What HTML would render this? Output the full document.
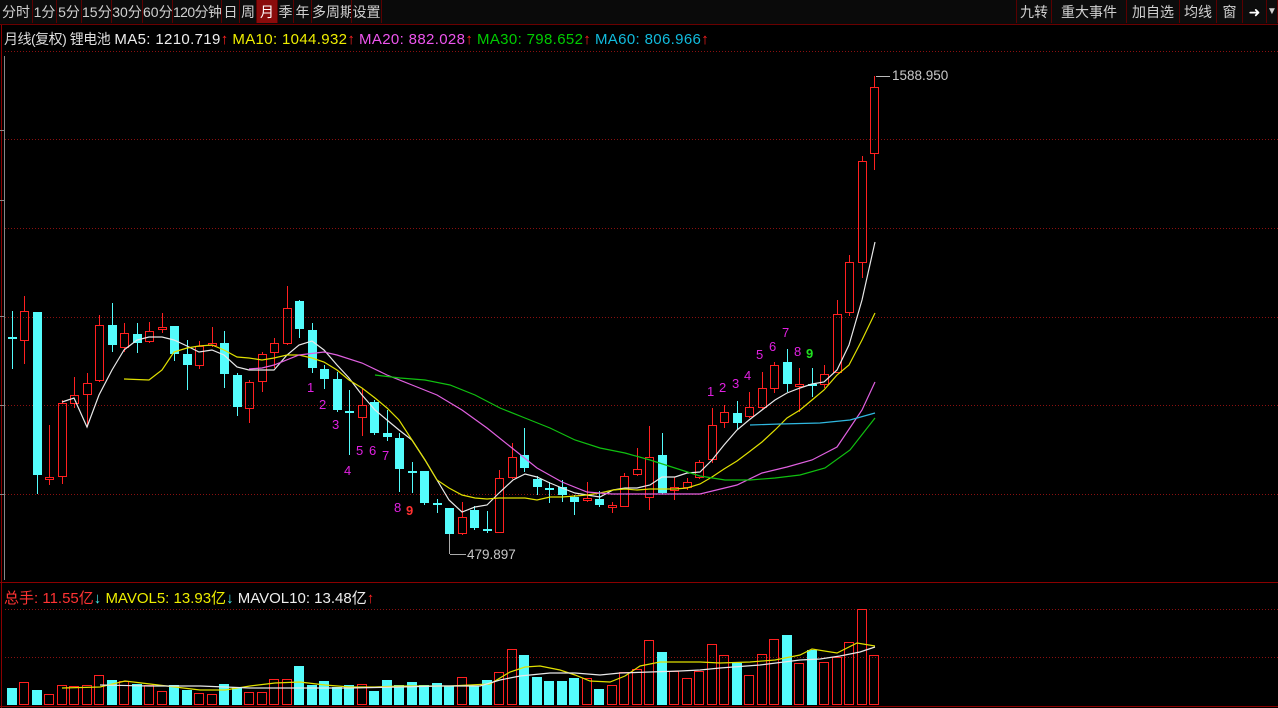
<!DOCTYPE html>
<html><head><meta charset="utf-8"><style>
html,body{margin:0;padding:0;background:#000;width:1278px;height:708px;overflow:hidden;font-family:"Liberation Sans","Noto Sans CJK SC",sans-serif;}
#tb{position:absolute;left:0;top:0;width:1278px;height:24px;background:#0a0a0a;border-bottom:1px solid #6a0000;}
.b{position:absolute;top:0;height:23px;line-height:24px;color:#d0d0d0;font-size:14px;text-align:center;border-right:1px solid #5a0000;box-sizing:border-box;background:#0c0c0c;white-space:nowrap;overflow:hidden;}
.sel{background:#8a0c0c;color:#fff;}
#info{position:absolute;left:4px;top:29px;font-size:15px;white-space:nowrap;color:#ddd;}
#info .cn{font-size:14px;letter-spacing:-0.5px;}
#info span.m{letter-spacing:0.35px;}
#vinfo{position:absolute;left:4px;top:587px;font-size:15px;white-space:nowrap;}
svg{position:absolute;left:0;top:0;}
</style></head><body>
<svg id="s" width="1278" height="708" shape-rendering="crispEdges"></svg>
<div id="tb">
<div class="b" style="left:0;width:33px">分时</div>
<div class="b" style="left:33px;width:24px">1分</div>
<div class="b" style="left:57px;width:25px">5分</div>
<div class="b" style="left:82px;width:30px">15分</div>
<div class="b" style="left:112px;width:31px">30分</div>
<div class="b" style="left:143px;width:30px">60分</div>
<div class="b" style="left:173px;width:49px;letter-spacing:-0.6px">120分钟</div>
<div class="b" style="left:222px;width:18px">日</div>
<div class="b" style="left:240px;width:17px">周</div>
<div class="b sel" style="left:257px;width:21px">月</div>
<div class="b" style="left:278px;width:16px">季</div>
<div class="b" style="left:294px;width:18px">年</div>
<div class="b" style="left:312px;width:40px">多周期</div>
<div class="b" style="left:352px;width:30px">设置</div>
<div class="b" style="left:1016px;width:36px;border-left:1px solid #5a0000">九转</div>
<div class="b" style="left:1052px;width:75px">重大事件</div>
<div class="b" style="left:1127px;width:53px">加自选</div>
<div class="b" style="left:1180px;width:37px">均线</div>
<div class="b" style="left:1217px;width:26px">窗</div>
<div class="b" style="left:1243px;width:24px;color:#fff">➜</div>
<div class="b" style="left:1267px;width:11px;font-size:10px">▼</div>
</div>
<div id="info"><span class="cn">月线(复权) 锂电池</span> <span class="m" style="color:#eee">MA5: 1210.719</span><span style="color:#f22">↑</span> <span class="m" style="color:#ee0">MA10: 1044.932</span><span style="color:#f22">↑</span> <span class="m" style="color:#e5e">MA20: 882.028</span><span style="color:#f22">↑</span> <span class="m" style="color:#0c0">MA30: 798.652</span><span style="color:#f22">↑</span> <span class="m" style="color:#1bd">MA60: 806.966</span><span style="color:#f22">↑</span></div>
<div id="vinfo"><span style="color:#f33">总手: 11.55亿</span><span style="color:#4ee">↓</span> <span style="color:#ee0">MAVOL5: 13.93亿</span><span style="color:#4ee">↓</span> <span style="color:#eee">MAVOL10: 13.48亿</span><span style="color:#f22">↑</span></div>
<script>
var C=[
[0,337,339,311,369],[1,311,340,296,364],[0,312,475,312,494],[1,477,479,425,485],[1,403,476,400,484],[1,395,403,377,408],[1,383,394,373,427],[1,325,380,315,382],[0,325,345,303,352],[1,333,347,323,352],[0,334,343,323,353],[1,331,341,322,343],[1,327,329,313,333],[0,326,354,326,361],[0,354,365,340,390],[1,346,365,341,369],[1,343,345,327,347],[0,343,374,331,388],[0,375,407,373,416],[1,382,408,380,423],[1,354,381,352,392],[1,343,352,338,368],[1,308,343,286,345],[0,301,329,300,338],[0,330,368,323,373],[0,369,379,365,389],[0,379,410,372,412],[0,411,413,390,455],[1,405,417,389,436],[0,402,433,400,435],[0,433,437,410,441],[0,438,469,433,492],[0,471,473,462,493],[0,471,503,471,505],[0,503,505,499,513],
[0,508,534,508,553],[1,517,533,502,535],[0,510,528,506,530],[0,529,531,511,533],[1,478,532,470,533],[1,457,477,443,479],[0,455,468,428,472],[0,479,487,476,495],[0,488,490,482,503],[0,487,495,480,502],[0,497,502,495,515],[1,498,500,482,502],[0,499,505,491,507],[1,505,507,502,513],[1,476,506,473,507],[1,469,474,448,476],[1,457,497,426,510],[0,455,493,433,494],[1,487,490,477,500],[1,482,487,478,490],[1,462,477,460,479],[1,425,459,408,463],[1,412,422,405,428],[0,413,423,401,430],[1,407,416,392,418],[1,388,407,372,409],[1,365,388,362,393],[0,362,384,349,392],[1,384,386,368,412],[0,384,386,368,397],[1,374,384,365,388],[1,314,372,300,373],[1,262,312,255,316],[1,161,262,156,278],[1,87,153,76,170]];
var V0=[325,307,329,341,315,318,315,285,299,304,313,316,334,314,329,340,342,311,322,336,336,297,297,259,315,304,320,314,313,333,300,314,305,316,310];
var VT=[];V0.forEach(function(z){VT.push(Math.round(580+z/3));});
VT=VT.concat([686,677,686,680,672,649,655,677,681,681,678,678,689,685,672,669,640,652,671,678,671,644,655,663,675,654,639,635,663,650,662,657,642,609,655]);
var h='';
function ln(y1,y2,c,x1,x2,d){return '<line x1="'+x1+'" y1="'+y1+'" x2="'+x2+'" y2="'+y2+'" stroke="'+c+'" stroke-width="1" '+(d?'stroke-dasharray="1,2"':'')+'/>';}
[51,139,228,317,405,494,609,657].forEach(function(y){h+=ln(y+.5,y+.5,'#8a1010',5,1278,1);});
h+=ln(582.5,582.5,'#8a0000',0,1278);h+=ln(706.5,706.5,'#8a0000',0,1278);
h+='<line x1="1.5" y1="24" x2="1.5" y2="708" stroke="#8a0000"/>';
h+='<line x1="4.5" y1="56" x2="4.5" y2="580" stroke="#888"/>';
[130,200,316,405,494].forEach(function(y){h+=ln(y+.5,y+.5,'#888',0,5);});
var bc=['#54fcfc','#ff2020'];
for(var i=0;i<C.length;i++){var c=C[i],xi=Math.floor(12+12.5*i),x=xi+.5,t=c[1],b=c[2];var col=bc[c[0]];
h+=ln(c[3],t,col,x,x)+ln(b,c[4],col,x,x);
if(b-t<2){h+=ln(t+.5,t+.5,col,x-4,x+4);}
else if(c[0])h+='<rect x="'+(x-4)+'" y="'+(t+.5)+'" width="8" height="'+(b-t)+'" fill="none" stroke="'+col+'"/>';
else h+='<rect x="'+(x-4.5)+'" y="'+t+'" width="9" height="'+(b-t)+'" fill="'+col+'"/>';
var vy=VT[i];var vx=xi;
if(c[0])h+='<rect x="'+(vx-4.5)+'" y="'+(vy+.5)+'" width="9" height="'+(704-vy)+'" fill="none" stroke="#ff2020"/>';
else h+='<rect x="'+(vx-5)+'" y="'+vy+'" width="10" height="'+(705-vy)+'" fill="#54fcfc"/>';
}
function pl(p,c){h+='<polyline fill="none" stroke="'+c+'" stroke-width="1.2" shape-rendering="auto" points="'+p+'"/>';}
pl('62,402 74,398 87,427 99,395 112,370 124,350 137,340 149,337 162,337 174,340 187,346 199,352 212,350 224,355 237,367 249,370 262,370 274,370 287,355 299,345 312,341 324,350 337,365 349,378 362,395 375,410 387,420 399,430 412,440 425,460 437,480 449,500 462,512 475,507 487,505 499,493 513,480 525,474 537,477 550,483 562,488 575,493 587,495 600,497 613,490 625,488 637,488 650,485 662,477 675,477 687,473 700,472 712,460 724,445 737,430 749,420 762,410 775,400 787,393 800,388 812,384 824,382 837,370 849,345 862,300 875,242','#e8e8e8');
pl('124,379 149,380 162,370 174,352 187,348 199,346 212,345 224,350 237,357 249,358 262,360 274,358 287,355 299,355 312,358 324,362 337,370 349,380 362,388 375,398 387,408 399,420 412,440 425,460 437,480 449,488 462,495 475,498 487,499 499,498 513,498 525,498 537,500 550,497 562,497 575,496 587,495 600,493 613,490 625,489 637,490 650,489 662,489 675,489 687,488 700,484 712,477 724,469 737,461 749,452 762,442 775,430 787,418 800,410 812,400 824,390 837,375 849,365 862,340 875,313','#e0e000');
pl('249,369 262,368 274,365 299,355 324,352 337,355 362,363 387,375 412,385 437,395 462,410 487,428 512,448 537,468 562,482 587,492 612,494 650,494 700,494 737,485 762,473 787,467 812,460 837,447 862,410 875,382','#e060e0');
pl('375,375 400,378 425,380 450,385 475,395 500,408 525,418 550,428 575,440 600,448 625,453 650,460 675,468 700,476 725,480 750,480 775,478 800,475 825,468 850,450 875,418','#10c010');
pl('750,425 780,424 820,423 850,420 875,413','#30b8e0');
pl('62,688 100,687 125,681 150,684 175,687 200,690 225,690 250,686 275,683 300,682 325,685 350,687 375,687 400,686 425,686 450,686 490,684 510,672 525,667 540,666 560,670 575,675 590,681 610,682 625,676 640,666 660,662 700,662 720,663 750,662 775,660 800,655 812,649 837,653 857,643 875,646','#e0e000');
pl('100,685 150,686 200,686 250,688 300,688 350,688 400,687 440,686 480,686 500,680 520,676 550,673 575,673 600,675 620,673 650,672 680,671 700,670 720,668 760,665 800,660 820,659 840,656 860,652 875,647','#e8e8e8');
var L=[[1,310,392],[2,322,409],[3,335,429],[4,347,475],[5,359,455],[6,372,455],[7,385,460],[8,397,512],[1,710,396],[2,722,392],[3,735,388],[4,747,380],[5,759,359],[6,772,351],[7,785,337],[8,797,356]];
L.forEach(function(l){h+='<text x="'+(l[1]-3)+'" y="'+l[2]+'" fill="#e020e0" font-size="13" font-family="Liberation Sans">'+l[0]+'</text>';});
h+='<text x="406" y="515" fill="#ff3030" font-size="13" font-weight="bold" font-family="Liberation Sans">9</text>';
h+='<text x="806" y="358" fill="#20e020" font-size="13" font-weight="bold" font-family="Liberation Sans">9</text>';
h+=ln(76.5,76.5,'#bbb',876,890)+ln(534,554,'#aaa',449.5,449.5)+ln(554.5,554.5,'#aaa',450,466);
h+='<text x="892" y="80" fill="#c8c8c8" font-size="13.5" font-family="Liberation Sans">1588.950</text>';
h+='<text x="467" y="559" fill="#c8c8c8" font-size="13.5" font-family="Liberation Sans">479.897</text>';
document.getElementById('s').innerHTML=h;
</script>
</body></html>
